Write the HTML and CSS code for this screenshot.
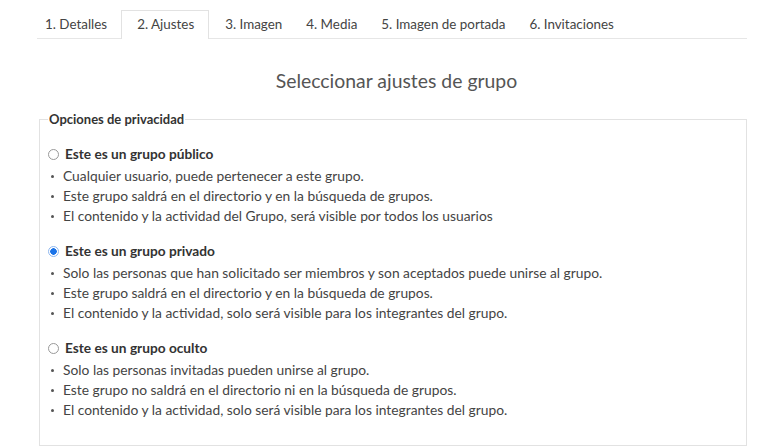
FILE: index.html
```html
<!DOCTYPE html>
<html lang="es">
<head>
<meta charset="utf-8">
<link rel="stylesheet" href="styles.css">
</head>
<body>
<div class="page">
  <ul class="tabs">
    <li class="tab first">1. Detalles</li>
    <li class="tab active">2. Ajustes</li>
    <li class="tab third">3. Imagen</li>
    <li class="tab">4. Media</li>
    <li class="tab">5. Imagen de portada</li>
    <li class="tab">6. Invitaciones</li>
  </ul>
  <h2 class="title">Seleccionar ajustes de grupo</h2>
  <fieldset class="privacy">
    <legend>Opciones de privacidad</legend>
    <div class="option">
      <label class="opt-label"><span class="radio"></span>Este es un grupo público</label>
      <ul class="bullets">
        <li>Cualquier usuario, puede pertenecer a este grupo.</li>
        <li>Este grupo saldrá en el directorio y en la búsqueda de grupos.</li>
        <li>El contenido y la actividad del Grupo, será visible por todos los usuarios</li>
      </ul>
    </div>
    <div class="option">
      <label class="opt-label"><span class="radio checked"></span>Este es un grupo privado</label>
      <ul class="bullets">
        <li>Solo las personas que han solicitado ser miembros y son aceptados puede unirse al grupo.</li>
        <li>Este grupo saldrá en el directorio y en la búsqueda de grupos.</li>
        <li>El contenido y la actividad, solo será visible para los integrantes del grupo.</li>
      </ul>
    </div>
    <div class="option">
      <label class="opt-label"><span class="radio"></span>Este es un grupo oculto</label>
      <ul class="bullets">
        <li>Solo las personas invitadas pueden unirse al grupo.</li>
        <li>Este grupo no saldrá en el directorio ni en la búsqueda de grupos.</li>
        <li>El contenido y la actividad, solo será visible para los integrantes del grupo.</li>
      </ul>
    </div>
  </fieldset>
</div>
</body>
</html>
```
FILE: styles.css
```css
html, body {
  margin: 0;
  padding: 0;
  background: #fff;
}
body {
  font-family: Lato, "Liberation Sans", sans-serif;
  color: #333;
}
.page {
  padding: 10px 21px 0 30px;
}
.tabs {
  list-style: none;
  margin: 0 0 0 7px;
  padding: 0;
  display: flex;
  border-bottom: 1px solid #e6e6e6;
}
.tab {
  font-size: 13.4px;
  color: #444;
  padding: 0 11px;
  height: 27px;
  line-height: 26px;
  border: 1px solid transparent;
  border-bottom: none;
  margin-bottom: -1px;
}
.tab.first {
  padding-left: 7px;
  padding-right: 13px;
}
.tab.third {
  padding-left: 15px;
}
.tab.active {
  background: #fff;
  border-color: #e2e2e2;
  height: 28px;
  padding: 0 14px 0 15px;
}
.title {
  margin: 30px 0 0;
  padding-left: 16px;
  text-align: center;
  font-weight: 400;
  font-size: 19.4px;
  line-height: 24px;
  color: #555;
}
.privacy {
  margin: 18px 0 0 9px;
  border: 1px solid #e2e2e2;
  padding: 17px 12px 26px 13px;
  min-width: 0;
  height: 290px;
  box-sizing: content-box;
}
.privacy legend {
  font-size: 13px;
  font-weight: 700;
  color: #333;
  padding: 0 1px;
  margin-left: -5px;
}
.option + .option {
  margin-top: 15px;
}
.opt-label {
  display: flex;
  align-items: center;
  font-size: 13.7px;
  font-weight: 700;
  color: #333;
  line-height: 20px;
  height: 20px;
}
.radio {
  width: 9px;
  height: 9px;
  border: 1px solid #999;
  border-radius: 50%;
  margin: 0 6px 0 -5px;
  box-sizing: content-box;
  flex: none;
}
.radio.checked {
  border-color: #8fb8f0;
  background: radial-gradient(circle, #1a73e8 0 3px, #fff 3.5px);
}
.bullets {
  list-style: none;
  margin: 2px 0 0;
  padding: 0;
}
.bullets li {
  position: relative;
  font-size: 13.8px;
  line-height: 20px;
  color: #444;
  padding-left: 12px;
  margin-left: -2px;
}
.bullets li::before {
  content: "";
  position: absolute;
  left: 0;
  top: 9px;
  width: 3px;
  height: 3px;
  border-radius: 50%;
  background: #555;
}
```
